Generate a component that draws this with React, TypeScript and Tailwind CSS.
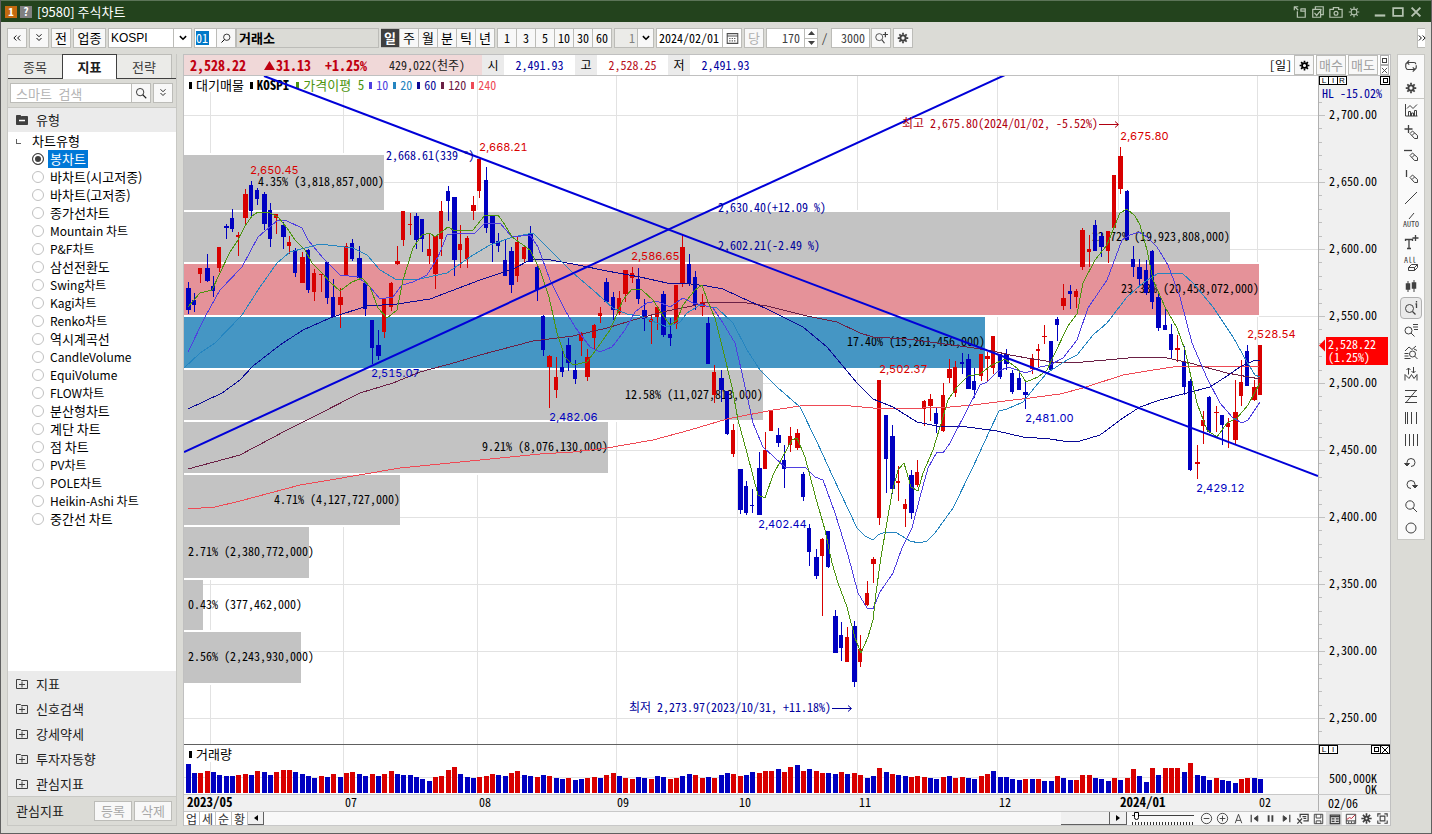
import { clsx } from "clsx";
import { ReactNode, useState } from "react";

const chartTypes = [
    "봉차트",
    "바차트(시고저종)",
    "바차트(고저종)",
    "종가선차트",
    "Mountain 차트",
    "P&F차트",
    "삼선전환도",
    "Swing차트",
    "Kagi차트",
    "Renko차트",
    "역시계곡선",
    "CandleVolume",
    "EquiVolume",
    "FLOW차트",
    "분산형차트",
    "계단 차트",
    "점 차트",
    "PV차트",
    "POLE차트",
    "Heikin-Ashi 차트",
    "중간선 차트",
];

const sections = ["지표", "신호검색", "강세약세", "투자자동향", "관심지표"];

const RED = "#d80000";
const BLUE = "#0000c0";

const FIRST_X = 187.5;
const STEP = 6.346;

// [high, body top, body bottom, low, up]
const candles: [number, number, number, number, 0 | 1][] = [
    [282, 288, 310, 314, 0], [293, 300, 305, 312, 0], [268, 268, 274, 283, 1], [254, 268, 281, 282, 0],
    [276, 286, 291, 297, 0], [247, 247, 268, 272, 1], [224, 226, 228, 239, 0], [209, 218, 229, 232, 0],
    [232, 235, 237, 256, 1], [189, 194, 218, 224, 1], [181, 185, 211, 218, 0], [188, 190, 199, 205, 0],
    [192, 194, 224, 230, 0], [203, 210, 239, 247, 0], [214, 214, 218, 234, 1], [222, 225, 237, 249, 0],
    [236, 242, 246, 254, 1], [248, 250, 273, 277, 0], [252, 257, 283, 283, 1], [249, 250, 290, 293, 0],
    [269, 273, 292, 301, 1], [274, 274, 275, 292, 1], [262, 262, 298, 304, 0], [279, 297, 317, 317, 0],
    [288, 297, 305, 328, 1], [243, 246, 276, 276, 1], [239, 243, 259, 261, 0], [246, 258, 278, 278, 0],
    [282, 283, 309, 316, 0], [320, 320, 348, 364, 0], [330, 345, 356, 360, 0], [299, 299, 332, 338, 1],
    [282, 283, 307, 311, 1], [246, 261, 264, 265, 1], [211, 211, 240, 246, 1], [213, 224, 225, 235, 1],
    [213, 216, 240, 249, 0], [219, 219, 239, 252, 0], [234, 249, 256, 264, 1], [236, 236, 274, 289, 1],
    [201, 211, 239, 256, 1], [186, 191, 201, 221, 0], [197, 197, 260, 276, 0], [225, 244, 250, 268, 1],
    [236, 238, 259, 268, 1], [196, 205, 211, 220, 1], [159, 159, 191, 198, 1], [167, 180, 228, 233, 0],
    [215, 216, 243, 262, 0], [233, 241, 246, 252, 0], [239, 260, 276, 276, 0], [247, 251, 285, 293, 0],
    [237, 242, 276, 282, 1], [247, 247, 259, 262, 1], [226, 234, 262, 262, 0], [264, 267, 290, 301, 0],
    [315, 316, 350, 356, 0], [355, 356, 367, 408, 1], [357, 377, 390, 398, 1], [350, 367, 372, 377, 0],
    [338, 345, 363, 371, 0], [360, 370, 379, 384, 0], [332, 333, 341, 356, 1], [349, 357, 377, 381, 1],
    [324, 325, 338, 349, 1], [307, 313, 316, 323, 1], [278, 282, 302, 302, 0], [292, 297, 310, 320, 0],
    [291, 298, 313, 315, 1], [270, 270, 294, 302, 1], [267, 273, 278, 283, 1], [268, 279, 299, 304, 0],
    [299, 310, 319, 331, 0], [316, 319, 322, 344, 1], [306, 307, 317, 330, 1], [291, 294, 335, 337, 0],
    [318, 334, 338, 346, 0], [285, 285, 324, 329, 1], [235, 247, 284, 287, 1], [254, 264, 284, 286, 0],
    [271, 277, 305, 310, 0], [294, 302, 307, 316, 1], [317, 323, 364, 364, 0], [365, 372, 395, 403, 1],
    [370, 378, 390, 402, 0], [391, 391, 434, 435, 0], [424, 430, 454, 457, 1], [469, 469, 510, 514, 0],
    [481, 486, 513, 515, 0], [489, 505, 506, 513, 0], [452, 468, 515, 515, 0], [432, 450, 469, 469, 1],
    [411, 411, 431, 431, 1], [428, 435, 443, 447, 0], [445, 460, 469, 488, 0], [427, 436, 445, 452, 1],
    [429, 433, 448, 450, 1], [472, 474, 497, 501, 0], [524, 528, 552, 566, 0], [549, 557, 576, 579, 0],
    [538, 539, 556, 616, 1], [531, 531, 567, 568, 0], [610, 616, 653, 653, 0], [622, 635, 648, 661, 0],
    [627, 637, 662, 662, 1], [621, 626, 682, 687, 0], [635, 649, 662, 667, 1], [581, 593, 605, 606, 1],
    [557, 559, 564, 583, 1], [380, 380, 518, 525, 1], [415, 415, 459, 493, 0], [425, 436, 489, 494, 0],
    [466, 481, 483, 501, 1], [499, 504, 509, 527, 1], [470, 475, 513, 519, 0], [460, 472, 485, 487, 1],
    [400, 401, 409, 426, 1], [394, 399, 406, 421, 1], [407, 413, 424, 433, 0], [383, 395, 431, 432, 1],
    [359, 369, 378, 383, 1], [361, 367, 393, 397, 1], [353, 362, 364, 374, 0], [354, 359, 389, 389, 0],
    [368, 381, 390, 398, 0], [354, 354, 376, 381, 1], [352, 356, 359, 382, 1], [336, 336, 368, 374, 1],
    [354, 354, 377, 379, 0], [349, 354, 364, 370, 0], [370, 373, 392, 394, 0], [370, 378, 390, 390, 0],
    [382, 392, 395, 409, 0], [354, 358, 369, 374, 1], [344, 349, 351, 367, 1], [325, 336, 337, 344, 1],
    [341, 341, 370, 371, 0], [317, 319, 325, 341, 0], [284, 298, 306, 310, 1], [285, 291, 294, 309, 0],
    [289, 291, 297, 308, 1], [228, 230, 267, 270, 1], [235, 249, 252, 267, 1], [220, 225, 251, 251, 0],
    [232, 236, 247, 257, 0], [231, 231, 251, 263, 1], [175, 175, 228, 228, 1], [147, 156, 189, 194, 1],
    [190, 191, 240, 240, 0], [246, 259, 267, 277, 0], [259, 267, 279, 285, 0], [260, 270, 293, 295, 0],
    [250, 251, 302, 309, 0], [293, 297, 328, 331, 0], [307, 325, 330, 330, 0], [324, 334, 350, 359, 0],
    [335, 348, 350, 362, 1], [346, 362, 387, 395, 0], [379, 381, 470, 471, 0], [445, 462, 464, 479, 1],
    [411, 420, 426, 444, 1], [396, 397, 432, 433, 0], [406, 412, 413, 432, 1], [415, 415, 425, 445, 0],
    [418, 423, 427, 448, 1], [380, 412, 440, 444, 1], [360, 382, 396, 406, 1], [345, 351, 386, 386, 0],
    [380, 387, 400, 401, 1], [345, 345, 395, 395, 1],
];

const averages = [
    {
        color: "#ee4a55",
        points: "188,509 215,507 240,501 300,485 330,480 400,468 470,461 540,454 573,452 607,448 653,440 690,430 727,419 773,410 807,405 840,405 873,408 923,408 950,407 973,405 997,402 1030,398 1060,394 1083,388 1123,375 1147,371 1173,367 1260,366",
    },
    {
        color: "#6b2045",
        points: "188,469 240,455 287,430 313,417 360,393 393,383 420,372 457,362 480,355 533,341 573,336 607,328 640,318 667,311 687,307 710,302 740,302 767,306 807,316 837,322 860,333 873,337 907,339 937,343 967,347 993,351 1010,355 1033,359 1053,362 1083,362 1140,357 1167,358 1190,363 1227,373 1260,379",
    },
    {
        color: "#0a0a96",
        points: "188,409 222,393 240,380 253,366 280,345 303,330 330,318 367,306 397,304 430,299 480,280 513,269 532,259 545,259 573,264 607,271 640,277 667,283 683,283 707,286 723,289 740,297 767,309 803,327 827,347 857,383 873,399 893,407 917,422 937,426 967,427 997,431 1023,437 1050,439 1063,441 1080,441 1100,435 1123,418 1140,407 1160,400 1187,393 1210,387 1227,376 1240,367 1253,361 1260,360",
    },
    {
        color: "#2585c0",
        points: "184,368 200,353 215,343 242,315 260,287 277,263 290,252 320,244 353,248 367,255 380,270 397,280 420,279 447,273 473,255 490,245 513,237 533,233 545,245 553,253 573,273 593,290 613,308 627,314 640,316 657,323 667,327 680,322 687,313 700,305 717,308 733,323 747,350 760,370 777,387 800,407 817,442 833,477 857,528 865,536 873,540 878,535 885,532 897,533 910,541 919,543 927,541 935,533 953,508 973,467 990,430 999,411 1007,409 1023,402 1035,387 1047,373 1067,360 1077,355 1093,335 1107,323 1127,297 1143,283 1157,274 1170,273 1183,274 1193,283 1213,307 1233,337 1247,362 1255,375 1260,377",
    },
    {
        color: "#4f3fe0",
        points: "188,352 205,317 220,290 242,267 258,237 278,220 287,221 302,228 308,240 323,258 340,275 358,277 370,287 380,299 393,297 402,285 413,282 427,275 438,257 447,235 457,233 475,233 485,223 500,223 512,237 530,235 538,247 550,280 565,310 575,327 590,347 600,352 612,347 625,330 635,312 647,303 657,301 670,307 683,298 693,303 703,305 713,308 723,323 735,343 742,373 753,423 763,447 785,467 805,467 815,477 823,480 835,513 848,555 858,593 867,608 873,609 880,592 893,573 902,548 912,528 920,497 928,468 937,452 943,453 950,443 967,410 980,385 987,382 997,372 1008,367 1026,373 1040,367 1050,365 1063,358 1077,340 1088,308 1107,280 1122,240 1130,235 1139,232 1147,237 1157,247 1168,265 1180,297 1192,343 1207,378 1220,403 1233,418 1242,423 1248,420 1260,402",
    },
    {
        color: "#4c9410",
        points: "188,307 200,293 212,290 219,275 230,252 238,240 245,226 252,216 258,212 270,213 278,217 287,228 295,240 305,250 312,263 322,273 330,282 340,291 352,282 362,278 370,287 378,308 387,318 397,310 403,280 413,248 422,235 430,233 435,237 448,227 455,231 473,230 485,215 498,215 505,225 512,237 530,250 540,270 549,297 557,333 565,357 573,365 587,362 598,347 610,330 623,300 632,289 642,290 653,300 662,314 670,325 677,320 683,305 695,290 702,285 708,302 715,318 723,350 732,387 738,420 747,453 758,495 765,498 773,475 782,458 792,440 797,438 805,457 815,495 825,530 832,563 838,583 847,607 855,638 861,653 868,637 873,620 876,593 881,557 886,528 892,493 898,470 904,463 911,487 918,491 923,473 933,450 940,427 948,400 957,387 968,376 980,374 992,365 1005,359 1017,368 1026,382 1038,377 1047,370 1053,357 1068,326 1077,314 1083,283 1095,260 1107,245 1113,230 1120,213 1127,209 1135,216 1140,225 1147,250 1153,280 1165,307 1177,328 1185,350 1191,377 1197,403 1207,430 1217,437 1227,423 1237,418 1248,405 1260,383",
    },
];

const bands = [
    { y: 155, h: 55, end: 384, color: "#c3c3c3", label: "4.35% (3,818,857,000)" },
    { y: 212, h: 50, end: 1230, color: "#c3c3c3", label: "22.72% (19,923,808,000)" },
    { y: 264, h: 51, end: 1259, color: "#e59299", label: "23.33% (20,458,072,000)" },
    { y: 317, h: 51, end: 985, color: "#4596c4", label: "17.40% (15,261,456,000)" },
    { y: 370, h: 50, end: 763, color: "#c3c3c3", label: "12.58% (11,027,813,000)" },
    { y: 422, h: 51, end: 608, color: "#c3c3c3", label: "9.21% (8,076,130,000)" },
    { y: 475, h: 50, end: 400, color: "#c3c3c3", label: "4.71% (4,127,727,000)" },
    { y: 527, h: 51, end: 309, color: "#c3c3c3", label: "2.71% (2,380,772,000)" },
    { y: 580, h: 50, end: 203, color: "#c3c3c3", label: "0.43% (377,462,000)" },
    { y: 632, h: 51, end: 301, color: "#c3c3c3", label: "2.56% (2,243,930,000)" },
];

const peaks = [
    { x: 250, y: 174, text: "2,650.45", color: RED },
    { x: 479, y: 151, text: "2,668.21", color: RED },
    { x: 631, y: 260, text: "2,586.65", color: RED },
    { x: 879, y: 373, text: "2,502.37", color: RED },
    { x: 1120, y: 140, text: "2,675.80", color: RED },
    { x: 1247, y: 338, text: "2,528.54", color: RED },
    { x: 371, y: 377, text: "2,515.07", color: BLUE },
    { x: 549, y: 421, text: "2,482.06", color: BLUE },
    { x: 758, y: 528, text: "2,402.44", color: BLUE },
    { x: 1025, y: 422, text: "2,481.00", color: BLUE },
    { x: 1196, y: 492, text: "2,429.12", color: BLUE },
];

const notes = [
    { x: 386, y: 160, text: "2,668.61(339 °)", color: "#00009c" },
    { x: 718, y: 212, text: "2,630.40(+12.09 %)", color: "#00009c" },
    { x: 718, y: 250, text: "2,602.21(-2.49 %)", color: "#00009c" },
    { x: 902, y: 128, text: "최고 2,675.80(2024/01/02, -5.52%)", color: "#b00010" },
    { x: 629, y: 712, text: "최저 2,273.97(2023/10/31, +11.18%)", color: "#00009c" },
];

const volumes = [
    29, 20, 20, 22, 21, 18, 17, 17, 18, 19, 18, 22, 21, 18, 21, 23, 23, 21, 19, 17, 15, 17, 16, 19, 16, 20, 21, 19,
    17, 19, 17, 19, 22, 19, 18, 18, 16, 14, 12, 16, 17, 23, 26, 19, 16, 15, 16, 17, 19, 18, 17, 20, 22, 18, 17, 16,
    18, 17, 15, 14, 15, 13, 14, 15, 16, 15, 18, 20, 17, 15, 14, 16, 15, 14, 17, 16, 14, 15, 17, 19, 18, 15, 16, 15,
    18, 20, 19, 17, 18, 21, 20, 22, 22, 24, 21, 26, 28, 22, 24, 22, 20, 20, 19, 21, 19, 20, 18, 15, 17, 25, 21, 19,
    18, 17, 16, 17, 16, 15, 14, 16, 17, 15, 16, 15, 14, 17, 19, 22, 16, 16, 14, 13, 14, 14, 14, 12, 12, 17, 15, 13,
    13, 18, 18, 15, 14, 12, 15, 13, 15, 24, 17, 11, 25, 18, 25, 25, 25, 21, 30, 18, 17, 13, 15, 13, 12, 10, 14, 15,
    15, 14,
];

const volumeColors =
    "bbrrbbbbrrbrbbrrrbbbbrbrbrrbbrbrrbbbbbbrrrrbbbr" +
    "rrbbrrbbrbrbbrbbrrbrrbrrbbrbbrrbbrrbrbbrrbbrrrbrrbrbrrbbrbrrbbrbrbbrrrbbrbrrbbrrb" +
    "bbbbrbrbbrbbrrrbbbrbrrbbrbrrrbrbbbrbbbrrbb";

const months = [
    { x: 187, line: 210, text: "2023/05", bold: true },
    { x: 345, line: 343, text: "07" },
    { x: 479, line: 477, text: "08" },
    { x: 617, line: 616, text: "09" },
    { x: 739, line: 737, text: "10" },
    { x: 859, line: 857, text: "11" },
    { x: 999, line: 997, text: "12" },
    { x: 1120, line: 1118, text: "2024/01", bold: true },
    { x: 1259, line: 1257, text: "02" },
];

const legend = [
    { text: "대기매물", className: "text-black text-[13px] mr-[6px]" },
    { text: "KOSPI", className: "text-black text-[13px] font-bold mr-[7px]" },
    { text: "가격이평 5", className: "text-[#4c9410] text-[13px] mr-[5px]" },
    { text: "10", className: "text-[#4f3fe0] mr-[5px]" },
    { text: "20", className: "text-[#2585c0] mr-[5px]" },
    { text: "60", className: "text-[#0a0a96] mr-[5px]" },
    { text: "120", className: "text-[#6b2045] mr-[5px]" },
    { text: "240", className: "text-[#ee4a55]" },
];

const gridYs = Array.from({ length: 10 }, (_, i) => 115 + i * 67);

const Icon = ({ children, size = 16 }: { children: ReactNode; size?: number }) => (
    <svg
        width={size}
        height={size}
        viewBox="0 0 16 16"
        fill="none"
        stroke="currentColor"
        strokeWidth="1"
        className="shrink-0 overflow-visible"
        aria-hidden="true"
    >
        {children}
    </svg>
);

const Gear = ({ size = 16, thin = false }: { size?: number; thin?: boolean }) => (
    <Icon size={size}>
        <circle cx="8" cy="8" r={thin ? 3.3 : 3} strokeWidth={thin ? 1.2 : 2.2} />
        <g strokeWidth={thin ? 1.4 : 2}>
            <path d="M8 2v2.4M8 11.6V14M2 8h2.4M11.6 8H14M3.8 3.8l1.6 1.6M10.6 10.6l1.6 1.6M3.8 12.2l1.6-1.6M10.6 5.4l1.6-1.6" />
        </g>
    </Icon>
);

const Search = ({ size = 16 }: { size?: number }) => (
    <Icon size={size}>
        <circle cx="7" cy="7" r="4.2" />
        <path d="M10 10l4 4" strokeWidth="1.3" />
    </Icon>
);

const Pencil = () => <path d="M7 9.5L9.5 7l5 4.5v3h-3zM9 11.5L11.5 9" />;

const Chevron = () => (
    <Icon size={10}>
        <path d="M3 5l5 5 5-5" strokeWidth="2.4" />
    </Icon>
);

const DoubleDown = () => (
    <Icon size={10}>
        <path d="M4 2l4 4 4-4M4 8l4 4 4-4" strokeWidth="1.5" />
    </Icon>
);

const DoubleLeft = () => (
    <Icon size={10}>
        <path d="M7 4L3 8l4 4M13 4L9 8l4 4" strokeWidth="1.5" />
    </Icon>
);

const drawTools: { name: string; icon: ReactNode }[] = [
    {
        name: "차트 종류",
        icon: <path d="M2.5 2v12h12M5.5 14V9.5h2V14M8.5 14v-3h2v3M11.5 14V8.5h2V14M4 6.5l3-3 3 3 4-4" />,
    },
    { name: "십자선", icon: <><path d="M5.5 1v8M1.5 5h8" strokeWidth="1.3" /><Pencil /></> },
    { name: "수평선", icon: <><path d="M1 4.5h8" strokeWidth="1.3" /><Pencil /></> },
    { name: "수직선", icon: <><path d="M3.5 2v7" strokeWidth="1.3" /><Pencil /></> },
    { name: "추세선", icon: <path d="M2 14L14 2" /> },
    {
        name: "자동추세선",
        icon: (
            <>
                <path d="M6 7l5-6" />
                <text x="0" y="15" fontSize="8" fill="currentColor" stroke="none">
                    AUTO
                </text>
            </>
        ),
    },
    { name: "문자", icon: <path d="M2.5 7V5.5h7V7M6 5.5v9M4 14.5h4M12.5 1v6M9.5 4h6" strokeWidth="1.3" /> },
    {
        name: "모두 지우기",
        icon: (
            <>
                <text x="1" y="7" fontSize="8" fill="currentColor" stroke="none">
                    All
                </text>
                <path d="M5.5 11.5l3-3h6l-3 3zM5.5 11.5v3h6v-3M11.5 14.5l3-3v-3" />
            </>
        ),
    },
    {
        name: "캔들",
        icon: (
            <>
                <path d="M5 3v11M11 2v12" />
                <path d="M3.5 6h3v5h-3zM9.5 5h3v5h-3z" fill="currentColor" strokeWidth="1.5" />
            </>
        ),
    },
    { name: "정보 조회", icon: <><circle cx="6.5" cy="8.5" r="4" /><path d="M9.5 11.5l3 3M13.5 1v1.5M12.5 4h1v4" strokeWidth="1.3" /></> },
    { name: "데이터 조회", icon: <><circle cx="5.5" cy="8.5" r="3.5" /><path d="M8 11l3.5 3.5M10 2.5h5M10 5h5M11 7.5h4" /></> },
    { name: "패턴 조회", icon: <><circle cx="9.5" cy="10" r="3" /><path d="M11.5 12l3 3M2 7l4-4 3 2.5L13 2M1.5 9.5h4M1.5 12h4M1.5 14.5h6M11 5l3 1.5" /></> },
    { name: "파동", icon: <path d="M2 14.5v-6l4 4 2.5-4 2.5 4 3-4v6M5.5 8.5V2M3.5 4l2-2 2 2M10.5 1v6M8.5 5l2 2 2-2" /> },
    { name: "조정대", icon: <path d="M2 2.5h12M2 8.5h12M2 14.5h12M13 2.5L3 14.5" /> },
    { name: "피보나치", icon: <path d="M2.5 2v12M4.5 2v12M8.5 2v12M13.5 2v12" /> },
    { name: "등간격선", icon: <path d="M2.5 2v12M6.5 2v12M10.5 2v12M14.5 2v12" /> },
    { name: "되돌리기", icon: <><path d="M8 12.5a4 4 0 1 0-4-4v2" /><path d="M1.5 9.5h5L4 12z" fill="currentColor" /></> },
    { name: "다시하기", icon: <><path d="M8 12.5a4 4 0 1 1 4-4v2" /><path d="M9.5 9.5h5L12 12z" fill="currentColor" /></> },
    { name: "확대", icon: <><circle cx="7" cy="7" r="4.2" /><path d="M10 10l4 4" /></> },
    { name: "원", icon: <circle cx="8" cy="8" r="5" /> },
];

const footerTools: { name: string; icon: ReactNode }[] = [
    { name: "축소", icon: <><circle cx="8" cy="8" r="5.5" /><path d="M5 8h6" /></> },
    { name: "확대", icon: <><circle cx="8" cy="8" r="5.5" /><path d="M5 8h6M8 5v6" /></> },
    { name: "자동", icon: <path d="M4.5 13L8 3.5 11.5 13M5.5 10h5" /> },
    { name: "처음", icon: <><path d="M4.5 4v8" strokeWidth="1.3" /><path d="M11.5 5v6L7.5 8z" fill="currentColor" /></> },
    { name: "일시정지", icon: <path d="M6 4.5v7M10 4.5v7" strokeWidth="2" /> },
    { name: "마지막", icon: <><path d="M11.5 4v8" strokeWidth="1.3" /><path d="M4.5 5v6l4-3z" fill="currentColor" /></> },
    { name: "불러오기", icon: <path d="M5.5 7V3.5H14v7H9M8 6h4M9 8h3M2.5 8l5 5.5M7.5 8l-5 5.5" strokeWidth="1.3" /> },
    { name: "저장", icon: <path d="M3.5 3.5h9v10h-9zM5.5 3.5v4h5v-4M5.5 13.5v-3h5v3" /> },
    { name: "표", icon: <path d="M3.5 4.5h10v9h-10zM3.5 6h10M5 8.5h3M5 11h3M9.5 8.5h3M9.5 11h3" strokeWidth="1.3" /> },
    { name: "차트", icon: <><path d="M3.5 3.5h10v10h-10zM3.5 10.5h10M6 13v-2M9 13v-2M12 13v-2" /><path d="M4 9l3-2 2 1 4-4" stroke="#c02030" /></> },
    { name: "설정", icon: <path d="M8 2.5v3M8 10.5v3M2.5 8h3M10.5 8h3M4.2 4.2l2 2M9.8 9.8l2 2M4.2 11.8l2-2M9.8 6.2l2-2M6 8a2 2 0 1 0 4 0 2 2 0 1 0-4 0" strokeWidth="1.8" /> },
    { name: "전체화면", icon: <path d="M5.5 5.5h5v5h-5zM3 6V3h3M10 3h3v3M13 10v3h-3M6 13H3v-3" strokeWidth="1.2" /> },
];

const boxButton = "flex h-5 items-center justify-center border border-[#bcbcb8] bg-[#f8f8f8]";

const TitleBar = () => (
    <header className="flex h-[22px] shrink-0 items-center border-t border-[#5c7458] bg-[#23431d] pl-1 pr-2 text-white">
        <span className="flex h-3 w-3 items-center justify-center bg-[#c46a10] text-[11px] font-bold">1</span>
        <span className="ml-[3px] flex h-3 w-3 items-center justify-center bg-[#808080] text-[11px] font-bold">?</span>
        <h1 className="ml-[5px] font-['Noto_Sans_CJK_KR','Liberation_Sans',sans-serif] text-[13px]">[9580] 주식차트</h1>
        <div className="ml-auto flex items-center gap-1 text-[#b4c2b0]">
            <button aria-label="새 창">
                <Icon size={14}>
                    <path d="M1 2h5M1.5 2v4M2 2l4 4M5 7v7h9V4.5H9M9 4v3h5" strokeWidth="1.4" />
                </Icon>
            </button>
            <button aria-label="화면 묶음">
                <Icon size={14}>
                    <path d="M2 5h9v9H2zM5 5V2h9v9h-3M4 9l2.5 3L12 5" strokeWidth="1.4" />
                </Icon>
            </button>
            <button aria-label="캡처">
                <Icon size={14}>
                    <path d="M1 5h4V3h6v2h4v9H1z" strokeWidth="1.4" />
                    <circle cx="8" cy="9.5" r="2.2" strokeWidth="1.4" />
                </Icon>
            </button>
            <button aria-label="환경설정">
                <Gear size={14} thin />
            </button>
            <button aria-label="최소화" className="ml-2">
                <Icon size={14}>
                    <path d="M2 12h12" strokeWidth="2.5" />
                </Icon>
            </button>
            <button aria-label="최대화">
                <Icon size={14}>
                    <path d="M2.5 3.5h11v9h-11z" strokeWidth="2" />
                </Icon>
            </button>
            <button aria-label="닫기">
                <Icon size={14}>
                    <path d="M3 3l10 10M13 3L3 13" strokeWidth="2.3" />
                </Icon>
            </button>
        </div>
    </header>
);

const Toolbar = () => {
    const [period, setPeriod] = useState("일");

    return (
        <div className="flex h-8 shrink-0 items-center pl-[6px]">
            <button className={clsx(boxButton, "w-5")} aria-label="접기">
                <DoubleLeft />
            </button>
            <button className={clsx(boxButton, "ml-[2px] w-5")} aria-label="펼치기">
                <DoubleDown />
            </button>
            <button className={clsx(boxButton, "ml-[2px] w-5 text-[13px]")}>전</button>
            <button className={clsx(boxButton, "ml-[2px] w-[33px] text-[13px]")}>업종</button>
            <div className="relative ml-[2px] flex h-5 w-[84px] border border-[#bcbcb8] bg-white">
                <select
                    aria-label="종목"
                    className="h-full w-full appearance-none pl-[2px] font-['Liberation_Sans',sans-serif] text-[12px] outline-none"
                >
                    <option>KOSPI</option>
                </select>
                <span className="pointer-events-none absolute right-0 top-0 flex h-full w-[18px] items-center justify-center border-l border-[#bcbcb8]">
                    <Chevron />
                </span>
            </div>
            <label className="ml-[2px] flex h-5 w-[22px] items-center border border-r-0 border-[#bcbcb8] bg-white pl-[1px]">
                <input
                    aria-label="코드"
                    defaultValue="01"
                    className="h-[14px] w-[13px] bg-[#0078c8] text-white outline-none"
                />
            </label>
            <button className={clsx(boxButton, "w-5")} aria-label="종목 검색">
                <span className="-scale-x-100">
                    <Search size={12} />
                </span>
            </button>
            <div className="flex h-5 w-[143px] items-center border border-[#bcbcb8] pl-[2px] text-[13px] font-bold">
                거래소
            </div>
            <div className="ml-[2px] flex">
                {["일", "주", "월", "분", "틱", "년"].map((p) => (
                    <button
                        key={p}
                        onClick={() => setPeriod(p)}
                        className={clsx(
                            "flex h-5 w-[19px] items-center justify-center border-y border-r border-[#bcbcb8] text-[13px]",
                            period === p ? "bg-[#404040] font-bold text-white" : "bg-[#f8f8f8]"
                        )}
                    >
                        {p}
                    </button>
                ))}
            </div>
            <div className="ml-[2px] flex border-l border-[#bcbcb8]">
                {["1", "3", "5", "10", "30", "60"].map((m) => (
                    <button
                        key={m}
                        className="flex h-5 w-[19px] items-center justify-center border-y border-r border-[#bcbcb8] bg-[#f8f8f8]"
                    >
                        {m}
                    </button>
                ))}
            </div>
            <div className="relative ml-[2px] h-5 w-10 border border-[#bcbcb8] bg-[#ebebe8]">
                <select aria-label="간격" className="h-full w-full appearance-none pl-[14px] text-[#808080]">
                    <option>1</option>
                </select>
                <span className="pointer-events-none absolute right-0 top-0 flex h-full w-4 items-center justify-center border-l border-[#bcbcb8] bg-[#f8f8f8]">
                    <Chevron />
                </span>
            </div>
            <div className="ml-[2px] flex h-5 w-[86px] items-center border border-[#bcbcb8] bg-white">
                <input aria-label="날짜" defaultValue="2024/02/01" className="w-[65px] pl-[2px] outline-none" />
                <button
                    aria-label="달력"
                    className="flex h-full flex-1 items-center justify-center border-l border-[#bcbcb8] text-[#505050]"
                >
                    <Icon size={13}>
                        <path d="M1.5 2h13v12h-13zM1.5 5h13" strokeWidth="1.3" />
                        <path d="M4 8h8M4 11h8" strokeDasharray="1.5 1.5" strokeWidth="1.5" />
                    </Icon>
                </button>
            </div>
            <button className={clsx(boxButton, "ml-[2px] w-5 text-[13px] text-[#b0b0b0]")}>당</button>
            <div className="ml-[2px] flex h-5 w-[52px] border border-[#bcbcb8] bg-white">
                <input
                    aria-label="조회 개수"
                    defaultValue="170"
                    className="w-[37px] pr-[4px] text-right text-[#404040] outline-none"
                />
                <div className="flex flex-1 flex-col border-l border-[#bcbcb8] text-[#404040]">
                    <button aria-label="증가" className="flex flex-1 items-center justify-center border-b border-[#bcbcb8]">
                        <svg width="7" height="4" viewBox="0 0 7 4" fill="currentColor">
                            <path d="M0 4l3.5-4L7 4z" />
                        </svg>
                    </button>
                    <button aria-label="감소" className="flex flex-1 items-center justify-center">
                        <svg width="7" height="4" viewBox="0 0 7 4" fill="currentColor">
                            <path d="M0 0l3.5 4L7 0z" />
                        </svg>
                    </button>
                </div>
            </div>
            <span className="w-[13px] text-center text-[#404040]">/</span>
            <div className="flex h-5 w-[39px] border border-[#bcbcb8] bg-white">
                <input
                    aria-label="전체 개수"
                    defaultValue="3000"
                    className="w-full pr-[4px] text-right text-[#404040] outline-none"
                />
            </div>
            <button className={clsx(boxButton, "ml-[1px] w-5 text-[#404040]")} aria-label="연속 조회">
                <Icon size={14}>
                    <circle cx="6" cy="7" r="4" />
                    <path d="M9 10l3 4M13 1v6M10 4h6" strokeWidth="1.4" />
                </Icon>
            </button>
            <button className={clsx(boxButton, "ml-[2px] w-5 text-[#404040]")} aria-label="설정">
                <Gear size={14} />
            </button>
            <button
                aria-label="더보기"
                className="ml-auto mr-[6px] flex h-5 w-2 items-center justify-center border border-r-0 border-[#bcbcb8] bg-white"
            >
                <span className="-scale-x-100">
                    <DoubleLeft />
                </span>
            </button>
        </div>
    );
};

const FolderIcon = ({ open }: { open?: boolean }) => (
    <svg width="12" height="12" viewBox="0 0 12 12" fill="none" stroke="#404040" aria-hidden="true">
        <path d="M.5 1.5h4l1 1h6v8H.5z" fill={open ? "#404040" : "none"} />
        {open ? <path d="M3 6.5h6" stroke="#fff" strokeWidth="1.5" /> : <path d="M3 6.5h6M6 3.5v6" />}
    </svg>
);

const Sidebar = () => {
    const [picked, setPicked] = useState("봉차트");

    return (
        <aside className="flex w-[170px] shrink-0 flex-col border-x border-b border-[#c8c8c4] text-[13px] text-[#202020]">
            <div className="flex h-[25px] shrink-0 border-b border-[#404040]">
                <button className="w-[54px] border-t border-[#bcbcb8] bg-[#ebebe8] text-[#404040]">종목</button>
                <button className="-mb-px w-[55px] border-x border-t border-[#404040] bg-white font-bold">지표</button>
                <button className="w-[55px] border-r border-t border-[#bcbcb8] bg-[#ebebe8] text-[#404040]">전략</button>
            </div>
            <div className="flex h-7 shrink-0 items-center pl-[2px]">
                <input
                    aria-label="검색"
                    placeholder="스마트 검색"
                    className="h-5 w-[122px] border border-[#bcbcb8] bg-white pl-[5px] outline-none placeholder:text-[#b4b4b4]"
                />
                <button className={clsx(boxButton, "-ml-px w-5")} aria-label="찾기">
                    <Search size={14} />
                </button>
                <button className={clsx(boxButton, "ml-[2px] w-5")} aria-label="더보기">
                    <DoubleDown />
                </button>
            </div>
            <div className="flex h-[25px] shrink-0 items-center border-t border-[#c8c8c4] bg-[#ebebeb] pl-2">
                <FolderIcon open />
                <span className="ml-2">유형</span>
            </div>
            <fieldset className="flex min-h-0 flex-1 flex-col bg-white font-['Noto_Sans_CJK_KR','Liberation_Sans',sans-serif] text-black">
                <legend className="contents">
                    <span className="flex h-[18px] items-center pl-2">
                        <span className="h-[5px] w-[5px] border-b border-l border-[#606060]" />
                        <span className="ml-[11px]">차트유형</span>
                    </span>
                </legend>
                {chartTypes.map((type) => (
                    <label key={type} className="flex h-[18px] items-center pl-6">
                        <input
                            type="radio"
                            name="chartType"
                            checked={picked === type}
                            onChange={() => setPicked(type)}
                            className="h-3 w-3 appearance-none rounded-full border border-[#c0c0c0] bg-white checked:border-[#404040] checked:bg-[#404040] checked:shadow-[inset_0_0_0_2px_white]"
                        />
                        <span
                            className={clsx(
                                "ml-1 flex h-[18px] items-center px-[2px]",
                                /^[A-Z]/.test(type) && "text-[12px]",
                                picked === type && "bg-[#0078d7] text-white"
                            )}
                        >
                            {type}
                        </span>
                    </label>
                ))}
            </fieldset>
            {sections.map((section) => (
                <button key={section} className="flex h-[25px] shrink-0 items-center bg-[#ebebeb] pl-2">
                    <FolderIcon />
                    <span className="ml-2">{section}</span>
                </button>
            ))}
            <div className="flex h-[29px] shrink-0 items-center border-t border-[#c8c8c4] pl-2">
                <span>관심지표</span>
                <button className={clsx(boxButton, "ml-auto w-[38px] text-[#a8a8a8]")}>등록</button>
                <button className={clsx(boxButton, "ml-[2px] mr-1 w-[38px] text-[#a8a8a8]")}>삭제</button>
            </div>
        </aside>
    );
};

const QuoteBar = () => (
    <div className="flex h-[22px] shrink-0 items-center border-b border-t border-[#c0c0c0] bg-white">
        <div className="flex h-full w-[298px] shrink-0 items-center bg-[#f0d8d8] pl-[6px] text-[14px] font-bold text-[#c00010]">
            <span className="w-[74px]">2,528.22</span>
            <span className="flex w-[61px] items-center">
                <svg width="11" height="9" viewBox="0 0 11 9" className="mr-[1px]" fill="#c00010">
                    <path d="M5.5 0L11 9H0z" />
                </svg>
                31.13
            </span>
            <span className="w-16">+1.25%</span>
            <span className="text-[12px] font-normal text-[#202020]">429,022(천주)</span>
        </div>
        {[
            ["시", "2,491.93", "text-[#0000a0]"],
            ["고", "2,528.25", "text-[#b81020]"],
            ["저", "2,491.93", "text-[#0000a0]"],
        ].map(([name, value, color]) => (
            <div key={name} className="flex h-full items-center">
                <span className="flex h-full w-[22px] items-center justify-center bg-[#ebebeb]">{name}</span>
                <span className={clsx("w-[71px] text-center", color)}>{value}</span>
            </div>
        ))}
        <div className="ml-auto flex items-center">
            <span>[일]</span>
            <button className={clsx(boxButton, "ml-[2px] w-5")} aria-label="지표 설정">
                <Gear size={13} />
            </button>
            <button className={clsx(boxButton, "ml-[2px] w-[30px] text-[13px] text-[#a0a0a0]")}>매수</button>
            <button className={clsx(boxButton, "ml-[2px] w-[30px] text-[13px] text-[#a0a0a0]")}>매도</button>
            <div className="ml-[2px] mr-[1px] flex flex-col text-[#404040]">
                <button aria-label="최대화" className="flex h-[10px] w-[9px] items-center justify-center border border-[#b0b0b0]">
                    <span className="h-[5px] w-[5px] border border-[#404040]" />
                </button>
                <button aria-label="닫기" className="flex h-[10px] w-[9px] items-center justify-center border border-[#b0b0b0]">
                    <Icon size={7}>
                        <path d="M2 2l12 12M14 2L2 14" strokeWidth="2" />
                    </Icon>
                </button>
            </div>
        </div>
    </div>
);

const PriceChart = () => (
    <svg viewBox="184 76 1134 668" preserveAspectRatio="xMinYMin meet" className="relative block h-full w-full text-[12px]">
        <g stroke="#e2e2e2" shapeRendering="crispEdges">
            {gridYs.map((y) => (
                <line key={y} x1="184" x2="1318" y1={y + 0.5} y2={y + 0.5} />
            ))}
            {months.map((m) => (
                <line key={m.text} x1={m.line + 0.5} x2={m.line + 0.5} y1={m.line < 400 ? 92 : 76} y2="744" />
            ))}
        </g>
        {bands.map((b) => (
            <g key={b.y} shapeRendering="crispEdges">
                <rect x="184" y={b.y - 2} width={b.end - 184} height={b.h + 4} fill="#fff" />
                <rect x="184" y={b.y} width={b.end - 184} height={b.h} fill={b.color} />
            </g>
        ))}
        {bands.map((b) => (
            <text key={b.y} x={Math.max(188, b.end - b.label.length * 6)} y={Math.floor(b.y + b.h / 2) + 4}>
                {b.label}
            </text>
        ))}
        <g shapeRendering="crispEdges">
            {candles.map(([high, top, bottom, low, up], i) => {
                const x = Math.round(FIRST_X + i * STEP);
                return (
                    <g key={i} fill={up ? RED : BLUE}>
                        <rect x={x} y={high} width="1" height={low - high} />
                        <rect x={x - 2} y={top} width={i % 3 ? 4 : 5} height={Math.max(1, bottom - top)} />
                    </g>
                );
            })}
        </g>
        <g fill="none" shapeRendering="crispEdges">
            {averages.map((a) => (
                <polyline key={a.color} points={a.points} stroke={a.color} />
            ))}
        </g>
        <g stroke="#0000d8" strokeWidth="2">
            <line x1="264" y1="76" x2="1318" y2="476" />
            <line x1="184" y1="452" x2="1005" y2="75" />
        </g>
        <g className="font-['Inter',sans-serif] text-[11px] tabular-nums">
            {peaks.map((p) => (
                <text key={p.text} x={p.x} y={p.y} fill={p.color}>
                    {p.text}
                </text>
            ))}
        </g>
        {notes.map((n) => (
            <text key={n.text} x={n.x} y={n.y} fill={n.color}>
                {n.text}
            </text>
        ))}
        <path d="M1099 124.5h19M1115 121.5l3.5 3-3.5 3" fill="none" stroke="#b00010" />
        <path d="M832 708.5h19M848 705.5l3.5 3-3.5 3" fill="none" stroke="#00009c" />
    </svg>
);

const PriceAxis = () => (
    <svg viewBox="0 76 71 668" preserveAspectRatio="xMinYMin meet" className="block h-full w-full text-[12px]">
        <g stroke="#c0c0c0" shapeRendering="crispEdges">
            {Array.from({ length: 48 }, (_, i) => (
                <line key={i} x1="0" x2="3" y1={Math.round(101.5 + i * 13.4)} y2={Math.round(101.5 + i * 13.4)} />
            ))}
            {gridYs.map((y) => (
                <line key={y} x1="0" x2="6" y1={y + 0.5} y2={y + 0.5} />
            ))}
        </g>
        <text x="3" y="98" fill="#00009c">
            HL -15.02%
        </text>
        {gridYs.map((y, i) => (
            <text key={y} x="10" y={y + 4}>
                {`2,${700 - i * 50}.00`}
            </text>
        ))}
        <path d="M0 345.5l6-6v12z" fill="#f00" />
        <rect x="7" y="337" width="62" height="28" fill="#f00" />
        <text x="9" y="349" fill="#fff">
            2,528.22
        </text>
        <text x="9" y="362" fill="#fff">
            (1.25%)
        </text>
    </svg>
);

const VolumeChart = () => (
    <svg viewBox="184 745 1134 49" preserveAspectRatio="xMinYMin meet" className="relative block h-full w-full">
        <g stroke="#e2e2e2" shapeRendering="crispEdges">
            <line x1="184" x2="1318" y1="777.5" y2="777.5" />
            {months.map((m) => (
                <line key={m.text} x1={m.line + 0.5} x2={m.line + 0.5} y1={m.line < 300 ? 762 : 745} y2="794" />
            ))}
        </g>
        <g shapeRendering="crispEdges">
            {volumes.map((v, i) => (
                <rect
                    key={i}
                    x={Math.round(FIRST_X + i * STEP) - 2}
                    y={793 - v}
                    width="5"
                    height={v}
                    fill={volumeColors[i] === "r" ? RED : BLUE}
                />
            ))}
        </g>
    </svg>
);

const MiniButton = ({ label, children }: { label: string; children: ReactNode }) => (
    <button
        aria-label={label}
        className="-mr-px flex h-[9px] w-[10px] items-center justify-center border border-black bg-white font-['Liberation_Sans',sans-serif] text-[8px] leading-none"
    >
        {children}
    </button>
);

const Square = () => <span className="h-[5px] w-[5px] border border-black" />;

const ChartArea = () => (
    <main className="flex min-w-0 flex-1 flex-col border-l border-r border-[#c0c0c0] bg-white">
        <QuoteBar />
        <div className="flex min-h-0 flex-1 border-b border-[#606060]">
            <div className="relative min-w-0 flex-1">
                <div className="absolute left-[5px] top-[1px] flex h-4 items-center">
                    {legend.map((item) => (
                        <span key={item.text} className={clsx("flex items-center", item.className)}>
                            <span className="mr-[4px] h-[7px] w-[3px] bg-current" />
                            {item.text}
                        </span>
                    ))}
                </div>
                <PriceChart />
            </div>
            <div className="relative w-[72px] shrink-0 border-l border-[#b0b0b0] bg-[#f0f0f0]">
                <div className="absolute inset-x-0 top-0 flex">
                    <MiniButton label="왼쪽">L</MiniButton>
                    <MiniButton label="가운데">I</MiniButton>
                    <MiniButton label="오른쪽">R</MiniButton>
                    <span className="ml-auto mr-px flex">
                        <MiniButton label="확대">
                            <Square />
                        </MiniButton>
                    </span>
                </div>
                <PriceAxis />
            </div>
        </div>
        <div className="flex h-[50px] shrink-0 border-b border-[#c8c8c8]">
            <div className="relative min-w-0 flex-1">
                <div className="absolute left-[5px] top-[1px] flex h-4 items-center text-[13px]">
                    <span className="mr-[4px] h-[7px] w-[3px] bg-black" />
                    거래량
                </div>
                <VolumeChart />
            </div>
            <div className="relative w-[72px] shrink-0 border-l border-[#b0b0b0] bg-[#f0f0f0]">
                <div className="absolute inset-x-0 top-0 flex">
                    <MiniButton label="왼쪽">L</MiniButton>
                    <MiniButton label="가운데">I</MiniButton>
                    <span className="ml-auto mr-px flex">
                        <MiniButton label="확대">
                            <Square />
                        </MiniButton>
                        <MiniButton label="닫기">
                            <Icon size={8}>
                                <path d="M1 1l14 14M15 1L1 15" strokeWidth="2" />
                            </Icon>
                        </MiniButton>
                    </span>
                </div>
                <div className="flex h-full flex-col items-end justify-end pr-[13px] leading-[11px]">
                    <span>500,000K</span>
                    <span>0K</span>
                </div>
            </div>
        </div>
        <div className="flex h-4 shrink-0 bg-[#f0f0f0]">
            <svg
                viewBox="184 795 1134 16"
                preserveAspectRatio="xMinYMin meet"
                className="block h-full min-w-0 flex-1 overflow-visible text-[12px]"
            >
                {months.map((m) => (
                    <text key={m.text} x={m.x} y="807" className={m.bold ? "text-[13px] font-bold" : ""}>
                        {m.text}
                    </text>
                ))}
            </svg>
            <span className="w-[72px] shrink-0 border-l border-[#b0b0b0] pl-[9px] leading-4">02/06</span>
        </div>
        <div className="flex h-[15px] shrink-0 items-center border-b border-t border-[#c8c8c8] bg-[#f8f8f8]">
            {["업", "세", "순", "황"].map((name) => (
                <button key={name} className="h-full w-4 border-r border-[#c0c0c0] bg-white leading-[13px] text-[#303030]">
                    {name}
                </button>
            ))}
            <button
                aria-label="왼쪽으로"
                className="flex h-full w-4 items-center justify-center border-b border-r border-[#606060] bg-[#f0f0f0]"
            >
                <svg width="4" height="6" viewBox="0 0 4 6">
                    <path d="M4 0v6L0 3z" />
                </svg>
            </button>
            <div className="flex h-full min-w-0 flex-1 justify-end">
                <div className="h-full w-[49px] border-b border-r border-[#606060] bg-[#f0f0f0]" />
            </div>
            <button
                aria-label="오른쪽으로"
                className="flex h-full w-[17px] items-center justify-center border-b border-r border-[#606060] bg-[#f0f0f0]"
            >
                <svg width="4" height="6" viewBox="0 0 4 6">
                    <path d="M0 0v6l4-3z" />
                </svg>
            </button>
            <div className="ml-[5px] flex h-full w-[62px] flex-col justify-between">
                <input
                    type="range"
                    aria-label="간격 조절"
                    defaultValue={3}
                    className="mt-[3px] h-px w-full appearance-none bg-[#404040] [&::-webkit-slider-thumb]:h-2 [&::-webkit-slider-thumb]:w-[5px] [&::-webkit-slider-thumb]:appearance-none [&::-webkit-slider-thumb]:rounded-b-sm [&::-webkit-slider-thumb]:border [&::-webkit-slider-thumb]:border-black [&::-webkit-slider-thumb]:bg-white"
                />
                <div className="h-[3px] bg-[repeating-linear-gradient(90deg,#303030_0_1px,transparent_1px_3px)]" />
            </div>
            <div className="ml-[4px] flex h-full text-[#404040]">
                {footerTools.map((tool) => (
                    <button
                        key={tool.name}
                        aria-label={tool.name}
                        className={clsx("flex w-4 items-center justify-center", tool.name === "표" && "bg-[#dcdcdc]")}
                    >
                        <Icon size={15}>{tool.icon}</Icon>
                    </button>
                ))}
            </div>
        </div>
    </main>
);

const DrawToolbar = () => {
    const [tool, setTool] = useState("정보 조회");

    return (
        <nav className="ml-[6px] flex w-7 shrink-0 flex-col self-start border border-[#c8c8c4] bg-[#fafafa] text-[#404040]">
            <button aria-label="새로고침" className="flex h-[22px] items-center justify-center">
                <Icon size={14}>
                    <path
                        d="M2 10V6.5C2 4.5 3 4 5 4h6.5c1.5 0 2 1 2 2M6 1.5L3.5 4 6 6.5M14 7v2.5c0 2-1 2.5-3 2.5H4.5c-1.5 0-2-1-2-2M10 9.5l2.5 2.5-2.5 2.5"
                        strokeWidth="1.3"
                    />
                </Icon>
            </button>
            <button aria-label="설정" className="flex h-[22px] items-center justify-center border-b border-[#c8c8c4]">
                <Gear size={14} />
            </button>
            {drawTools.map(({ name, icon }) => (
                <button
                    key={name}
                    aria-label={name}
                    onClick={() => setTool(name)}
                    className={clsx(
                        "mx-[2px] flex h-[22px] items-center justify-center",
                        tool === name && "rounded border border-[#b0b0b0] bg-[#ebebeb]"
                    )}
                >
                    <Icon>{icon}</Icon>
                </button>
            ))}
        </nav>
    );
};

const App = () => (
    <div className="flex h-screen flex-col border-x border-b border-[#606060] bg-[#dbdbd6] font-['Noto_Sans_Mono_CJK_KR','Noto_Sans_CJK_KR','Liberation_Sans',monospace] text-[12px] text-black">
        <TitleBar />
        <Toolbar />
        <div className="flex min-h-0 flex-1 pb-[7px] pl-[6px] pr-[6px]">
            <Sidebar />
            <div className="w-[6px] shrink-0" />
            <ChartArea />
            <DrawToolbar />
        </div>
    </div>
);

export default App;
